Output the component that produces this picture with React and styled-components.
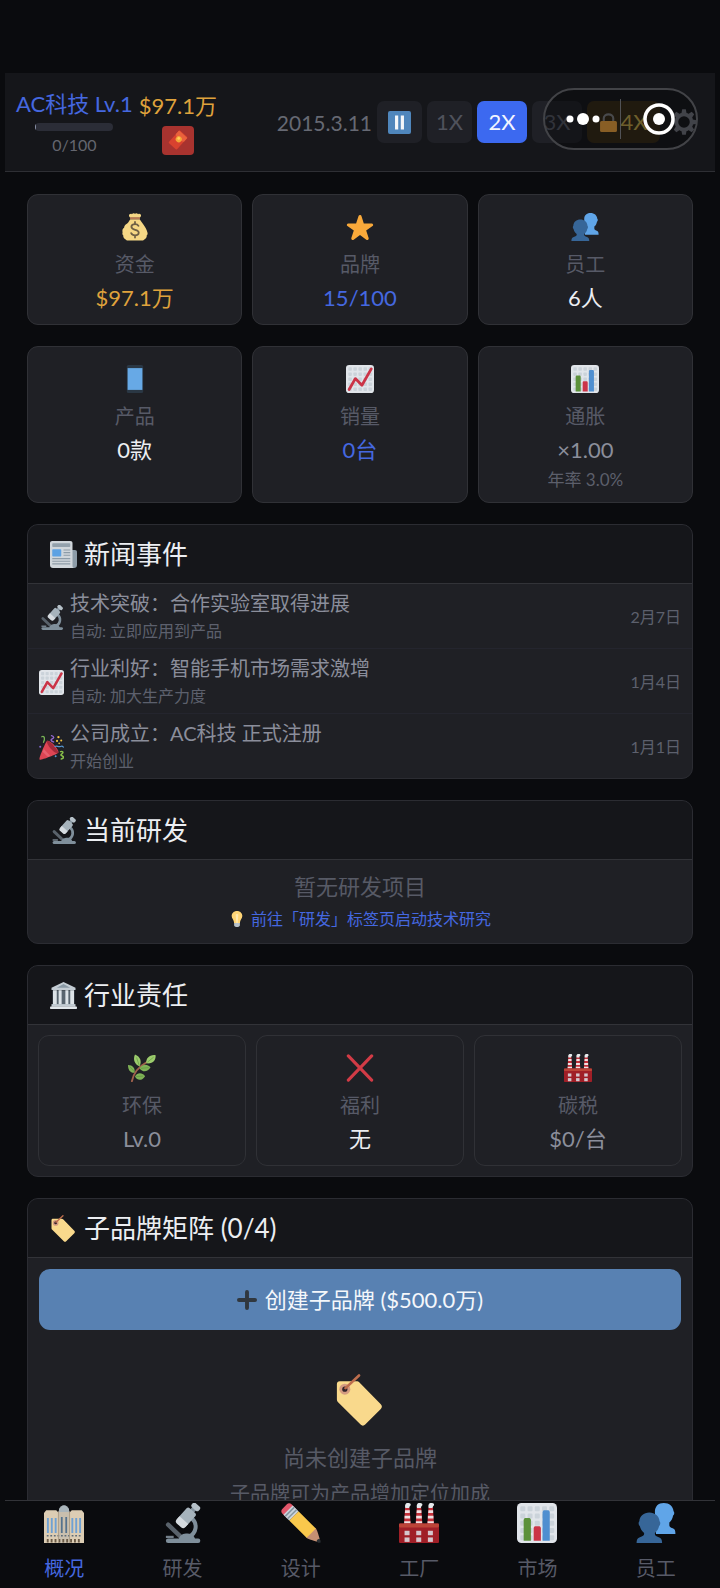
import React, { useState } from 'react';
import styled, { createGlobalStyle } from 'styled-components';

const GlobalStyle = createGlobalStyle`
  * {
    box-sizing: border-box;
  }

  body {
    margin: 0;
    background-color: #0a0b0e;
    color: #eceef2;
    font-family: Lato, 'Noto Sans CJK SC', sans-serif;
    font-size: 20px;
  }

  button {
    font-family: inherit;
    border: none;
    padding: 0;
    cursor: pointer;
  }
`;

const tones = {
  gold: '#dfa23c',
  blue: '#4568e0',
  white: '#eceef2',
  muted: '#8b8e9b',
};

const Shell = styled.div`
  display: flex;
  flex-direction: column;
  height: 100vh;
  padding: 73px 5px 0;
`;

const Header = styled.header`
  position: relative;
  display: flex;
  flex: none;
  align-items: center;
  min-height: 99px;
  padding: 0 18px 0 11px;
  background-color: #15161a;
  border-bottom: 1px solid #2e2f34;
`;

const HeaderColumn = styled.div`
  display: flex;
  flex-direction: column;
  align-items: center;
  margin-right: 6px;
`;

const HeaderText = styled.span`
  font-size: 22px;
  line-height: 32px;
  white-space: nowrap;
  color: ${(props) => tones[props.$tone]};
`;

const Track = styled.div`
  width: 78px;
  height: 8px;
  margin: 3px 0 2px;
  border-radius: 4px;
  overflow: hidden;
  background-color: #2b2d37;
`;

const TrackFill = styled.div`
  height: 100%;
  background-color: #8c93a8;
`;

const LevelText = styled.span`
  font-size: 16px;
  line-height: 24px;
  color: #64666f;
`;

const GiftButton = styled.button`
  display: flex;
  align-items: center;
  justify-content: center;
  width: 32px;
  height: 29px;
  margin-top: 4px;
  border-radius: 4px;
  background-color: #a8332f;
`;

const Controls = styled.div`
  display: flex;
  align-items: center;
  gap: 5px;
  margin-left: auto;
`;

const DateText = styled.time`
  font-size: 21px;
  color: #666973;
`;

const SpeedButton = styled.button`
  display: flex;
  align-items: center;
  justify-content: center;
  gap: 2px;
  width: ${(props) => props.$width}px;
  height: 42px;
  border-radius: 7px;
  font-size: 22px;
  line-height: 32px;
  color: ${(props) => (props.$active ? '#f2f5ff' : '#4f525c')};
  background-color: ${(props) => (props.$active ? '#3c69f0' : '#1f2026')};
`;

const LockedButton = styled(SpeedButton)`
  color: #b39b45;
  background-color: #332814;
`;

const GearButton = styled.button`
  display: flex;
  margin-left: 6px;
  background: none;
`;

const Capsule = styled.div`
  position: absolute;
  top: 15px;
  right: 17px;
  display: flex;
  align-items: center;
  height: 62px;
  width: 155px;
  border: 2px solid #424347;
  border-radius: 31px;
  background-color: rgba(4, 5, 8, 0.4);
`;

const CapsuleButton = styled.button`
  display: flex;
  flex: 1;
  align-items: center;
  justify-content: center;
  height: 40px;
  background: none;

  & + & {
    border-left: 1px solid #515256;
  }
`;

const Main = styled.main`
  display: flex;
  flex: 1;
  flex-direction: column;
  gap: 21px;
  min-height: 0;
  padding: 22px 22px 0;
  overflow-y: auto;
  scrollbar-width: none;
`;

const CardGrid = styled.div`
  display: grid;
  flex: none;
  grid-template-columns: repeat(3, 1fr);
  gap: 21px 10px;
`;

const Card = styled.article`
  display: flex;
  flex-direction: column;
  align-items: center;
  padding: 9px;
  border: 1px solid #303136;
  border-radius: 11px;
  background-color: #1f2025;
`;

const CardIcon = styled.div`
  display: flex;
  align-items: center;
  height: 45px;
`;

const CardLabel = styled.span`
  font-size: 20px;
  line-height: 31px;
  color: #575a67;
`;

const CardValue = styled.span`
  font-size: 22px;
  line-height: 35px;
  color: ${(props) => tones[props.$tone]};
`;

const CardNote = styled.span`
  font-size: 17px;
  line-height: 26px;
  color: #5c5f6b;
`;

const PanelBox = styled.section`
  flex: none;
  border: 1px solid #2b2c32;
  border-radius: 11px;
  overflow: hidden;
  background-color: #1f2025;
`;

const PanelTitle = styled.h2`
  display: flex;
  align-items: center;
  gap: 7px;
  height: 59px;
  margin: 0;
  padding: 0 22px;
  border-bottom: 1px solid #323338;
  background-color: #15161a;
  font-size: 26px;
  font-weight: 400;
  line-height: 36px;
`;

const PanelBody = styled.div`
  padding: ${(props) => props.$padding || '10px'};
`;

const NewsList = styled.ul`
  margin: 0;
  padding: 0;
  list-style: none;
`;

const NewsItem = styled.li`
  display: flex;
  align-items: center;
  gap: 6px;
  padding: 5px 11px 3px;
  border-bottom: 1px solid #24252e;

  &:last-child {
    border-bottom: none;
  }
`;

const NewsText = styled.div`
  display: flex;
  flex: 1;
  flex-direction: column;
`;

const NewsTitle = styled.span`
  font-size: 20px;
  line-height: 28px;
  color: #8b8e9b;
`;

const NewsNote = styled.span`
  font-size: 16px;
  line-height: 28px;
  color: #5d606d;
`;

const Centered = styled.div`
  display: flex;
  flex-direction: column;
  align-items: center;
`;

const EmptyTitle = styled.span`
  font-size: 22px;
  line-height: 32px;
  color: #575a66;
`;

const HintLink = styled.a`
  display: flex;
  align-items: center;
  gap: 6px;
  font-size: 16px;
  line-height: 32px;
  color: #4568e0;
  text-decoration: none;
`;

const EmptyNote = styled.span`
  font-size: 20px;
  line-height: 38px;
  color: #575a66;
`;

const EmptyBrand = styled(Centered)`
  padding: 44px 0 40px;

  svg {
    margin-bottom: 16px;
  }
`;

const CreateButton = styled.button`
  display: flex;
  align-items: center;
  justify-content: center;
  gap: 8px;
  width: 100%;
  height: 61px;
  border-radius: 11px;
  background-color: #5881b2;
  color: #f4f7fb;
  font-size: 22px;
  line-height: 32px;
`;

const TabBar = styled.nav`
  display: grid;
  flex: none;
  grid-template-columns: repeat(6, 1fr);
  height: 88px;
  border-top: 1px solid #323338;
`;

const TabButton = styled.button`
  display: flex;
  flex-direction: column;
  align-items: center;
  gap: 8px;
  padding-top: 2px;
  background: none;
  font-size: 20px;
  line-height: 34px;
  color: ${(props) => (props.$active ? '#4568e0' : '#575a67')};
`;

const Svg = ({ size = 28, children }) => (
  <svg width={size} height={size} viewBox="0 0 36 36" aria-hidden="true">
    {children}
  </svg>
);

const MoneyBag = ({ size }) => (
  <Svg size={size}>
    <path fill="#F5D785" d="M12 8h12c2 3 3 4 5 7 2 3 4 6 5 10 .6 2 0 3-1 4 .5 2-1 4-3 5-1 1-2 1.500-4 1.500H10c-2 0-3-.5-4-1.500-2-1-3.500-3-3-5-1-1-1.600-2-1-4-.5-3 0-5 2-6 0-2 1-4 3-5 2-1 3-3 5-6z" />
    <path fill="#F5D785" d="M11 5c-1-1-1-3 0-3.500S13 .5 14 1.500C15 0 17-.2 18 1c1-1.200 3-1 4 .5 1-1 2.500-.5 3 0 1 .5 1 2.500 0 3.500l-1 1H12z" />
    <rect x="11.500" y="5.500" width="13" height="2.500" rx="1.200" fill="#B97A55" />
    <path fill="none" stroke="#6E5F45" strokeWidth="2.300" strokeLinecap="round" d="M22.500 16.500c-1-1.800-2.700-2.300-4.500-2.300-2.600 0-4.600 1.300-4.600 3.600 0 5.200 9.400 2.300 9.400 7.300 0 2.300-2 3.700-4.800 3.700-2.200 0-4-.9-4.900-2.900M18 11.500v2.700M18 29v2.500" />
  </Svg>
);

const Star = ({ size }) => (
  <Svg size={size}>
    <path fill="#F9A93A" d="M27.287 34.627c-.404 0-.806-.124-1.152-.371L18 28.422l-8.135 5.834c-.343.247-.746.371-1.148.371-.404 0-.811-.125-1.156-.377-.68-.493-.964-1.372-.703-2.173l3.179-9.536-8.186-5.680c-.682-.5-.96-1.380-.69-2.180.266-.8 1.020-1.340 1.860-1.340h.01l9.947.016 3.162-9.519c.266-.8 1.014-1.341 1.857-1.341.845 0 1.594.54 1.861 1.341l3.038 9.519 10.070-.016c.85-.001 1.590.54 1.860 1.340.26.8-.01 1.680-.7 2.180l-8.186 5.680 3.180 9.536c.26.8-.02 1.680-.7 2.173-.35.25-.757.377-1.160.377z" />
  </Svg>
);

const People = ({ size }) => (
  <Svg size={size}>
    <path fill="#60A5E8" d="M25 0c5 0 8.500 3 8.800 7.500.9.500.9 3-.4 3.800-.5 3-1.800 5-3.400 6.200v2.500c0 1.500 1 2 3 2.800 2 .7 2.500 2 2.500 5.200H18L17 8c0-5 3-8 8-8z" />
    <path fill="#376698" d="M12 8.500c5 0 9 3.200 9.200 8 1 .8.800 3.400-.4 4.300-.5 2.700-1.900 4.700-3.800 6.200v1c0 1.500 1 2 3.500 2.800 2 .7 3 2 3 5.200h-23c0-3.200 1-4.500 3-5.200C6 30 7.300 29.500 7.300 28v-1c-1.900-1.500-3.300-3.500-3.900-6.200-1.200-.9-1.400-3.500-.4-4.300.2-4.800 4-8 9-8z" />
  </Svg>
);

const Phone = ({ size }) => (
  <Svg size={size}>
    <rect x="7.500" y="0" width="21" height="36" rx="2" fill="#2A3744" />
    <rect x="8.500" y="4" width="19" height="28" fill="#67A9E6" />
  </Svg>
);

const tiles = [3, 9.500, 16, 22.500, 29];

const ChartPaper = () => (
  <>
    <rect width="36" height="36" rx="4" fill="#E1E5EA" />
    {tiles.map((y) =>
      tiles.map((x) => (
        <rect key={`${x}-${y}`} x={x} y={y} width="4.500" height="4.500" rx="1" fill="#CBD3DA" />
      ))
    )}
  </>
);

const ChartUp = ({ size }) => (
  <Svg size={size}>
    <ChartPaper />
    <path fill="none" stroke="#CB3447" strokeWidth="3.600" strokeLinecap="round" strokeLinejoin="round" d="M4 31.500L12 17.500l8.500 8.500L32.500 5" />
  </Svg>
);

const BarChart = ({ size }) => (
  <Svg size={size}>
    <ChartPaper />
    <path fill="#5C913B" d="M6 34V15.500c0-1.500.8-2 2-2h2.500c1.200 0 2 .5 2 2V34z" />
    <path fill="#CB3447" d="M15 34V23c0-1.500.8-2 2-2h2.500c1.200 0 2 .5 2 2v11z" />
    <path fill="#4F8FD0" d="M23 34V8.500c0-1.500.8-2 2-2h2.500c1.200 0 2 .5 2 2V34z" />
  </Svg>
);

const Newspaper = ({ size }) => (
  <Svg size={size}>
    <path fill="#8D9CA8" d="M27 12h6c2 0 3 1 3 3v17c0 2.500-1.500 4-4 4h-7z" />
    <path fill="#D0D6DB" d="M3 0h24c2 0 3 1 3 3v30c0 2 1 3 2 3H4c-2.500 0-4-1.500-4-4V3c0-2 1-3 3-3z" />
    <rect x="3" y="3" width="24" height="5" rx="1" fill="#93A1AC" />
    <rect x="3" y="11" width="12" height="9.500" rx="1" fill="#5DA2E3" />
    <path stroke="#8D9CA8" strokeWidth="1.400" d="M18 12h9M18 15.500h9M18 19h9M3 23.500h24M3 27h24M3 30.500h24" />
  </Svg>
);

const Microscope = ({ size }) => (
  <Svg size={size}>
    <path stroke="#59626B" strokeWidth="4" strokeLinecap="round" d="M5.500 19.500l11 10.500" />
    <path fill="#74808B" d="M3.500 29.500h7v2h-7z" />
    <path fill="none" stroke="#7F8F9B" strokeWidth="3.600" strokeLinecap="round" d="M27 14c5 4.500 4.500 13-3 16.500" />
    <path fill="#7F8F9B" d="M15 33c1-4.500 4-5.500 8-5.500 4.500 0 6 2.500 7 5.500z" />
    <rect x="3.500" y="32" width="31" height="4" rx="2" fill="#7F8F9B" />
    <g transform="rotate(42 21.500 13)">
      <path fill="#83929E" d="M19.500 0h4.500v6h-4.500z" />
      <rect x="16.500" y="4.500" width="10.500" height="16" rx="2" fill="#A6B3BC" />
      <path fill="#D5DBE0" d="M16.500 16h10.500v4c0 1.500-1 2.500-2.500 2.500H19c-1.500 0-2.500-1-2.500-2.500z" />
      <rect x="17.500" y="-2.500" width="8.500" height="5" rx="2" fill="#B5C0C8" />
    </g>
  </Svg>
);

const Popper = ({ size }) => (
  <Svg size={size}>
    <path fill="#DD4554" d="M11.500 8.500c1-1 7 2 11 6.500s6.500 9 5.300 10.500C26 27.500 3 36.500 1 35.500S9.500 10 11.500 8.500z" />
    <path fill="#A52A3A" d="M11.500 8.500c3-.5 6.500 3.500 10 7.500s6.500 8 6.300 9.500c-3 1.300-7-1.500-10.500-5.500S11 12 11.500 8.500z" />
    <path fill="#E8606E" d="M7 20l9 10-3 1.500-8-7.500z" />
    <path fill="none" stroke="#77B255" strokeWidth="1.900" strokeLinecap="round" d="M4 2.500c4-2 5 3 2.500 8" />
    <path fill="none" stroke="#9266CC" strokeWidth="2" strokeLinecap="round" d="M18 1c4 1.500 4 3 1 4.500s-1 3.500 2 4.500" />
    <path fill="none" stroke="#8AC04A" strokeWidth="2" strokeLinecap="round" d="M31 24c5-1 4 2 1.500 3.500S33 30 35 31s-1 3-3 3.500" />
    <path fill="none" stroke="#5795D0" strokeWidth="1.800" strokeLinecap="round" d="M23 16.500c3-1.500 5 1.500 8 0s3 0 4 1" />
    <g fill="#F4C542">
      <circle cx="28" cy="3" r="1.700" />
      <circle cx="32" cy="8" r="1.500" />
      <circle cx="26" cy="8.500" r="1.500" />
      <circle cx="29" cy="12" r="1.200" />
    </g>
    <circle cx="1.800" cy="17" r="1.500" fill="#8266CC" />
    <circle cx="24" cy="30.500" r="1.400" fill="#5795D0" />
  </Svg>
);

const Bulb = ({ size }) => (
  <Svg size={size}>
    <path fill="#FFD576" d="M18 0c7 0 12 5 12 11.500 0 6-5.500 9-5.500 15.500h-13C11.500 20.500 6 17.500 6 11.500 6 5 11 0 18 0z" />
    <path fill="#FFE9B0" d="M15 8c0-2 6-2 6 0l-1.500 19h-3z" />
    <path fill="#B8C2CA" d="M11.500 27h13v5c0 2.500-3 4-6.500 4s-6.500-1.500-6.500-4z" />
  </Svg>
);

const Bank = ({ size }) => (
  <Svg size={size}>
    <path fill="#C3CCD3" d="M18 0l16 7.500v3H2v-3z" />
    <path fill="#8999A5" d="M18 2.800l9 4.700H9z" />
    <rect x="3.500" y="11" width="29" height="20" fill="#59656F" />
    <path fill="#DDE3E7" d="M4 11h5v19H4zM11.500 11h4v19h-4zM20.500 11h4v19h-4zM27 11h5v19h-5z" />
    <rect x="2" y="29.500" width="32" height="3.500" fill="#C3CCD3" />
    <rect x="0" y="32.500" width="36" height="3.500" rx="1" fill="#E1E6EA" />
  </Svg>
);

const Herb = ({ size }) => (
  <Svg size={size}>
    <path fill="none" stroke="#A0614C" strokeWidth="2.400" strokeLinecap="round" d="M5 35c2-10 7-18 20-25" />
    <path fill="#9BCB6C" d="M35.500 1.500c.5 6-3 11.500-12 10.500-.5-6.500 4-11.500 12-10.500zM9 .5c7 3 9 8.500 6 15.500C8.500 13 6 7 9 .5z" />
    <path fill="#7FB256" d="M15 18.500c3-6 10-6 14-1.500-3.500 6-10 7-14 1.500zM9 29c3-5.500 9-5.500 13-.5-3.500 6-10 6.500-13 .5zM8.500 24C3 24.500 0 20.500 0 14c6 0 9.500 4 8.500 10z" />
    <path fill="none" stroke="#5C913B" strokeWidth="0.800" d="M25 10.500l8-6.500M14.500 15L11 4.500M16.500 18.500l10-1M10.500 29l9-.5M8 22.500l-5.500-6" />
  </Svg>
);

const Cross = ({ size }) => (
  <Svg size={size}>
    <path stroke="#D23B46" strokeWidth="4" strokeLinecap="round" d="M3 2.500l30 31M33 2.500l-30 31" />
  </Svg>
);

const Factory = ({ size }) => (
  <Svg size={size}>
    {[4.500, 15, 25.500].map((x) => (
      <g key={x}>
        <path fill="#C5303A" d={`M${x + 1} 4h4l1 15h-6z`} />
        <path fill="#EFE2E4" d={`M${x + 1} 6.500h4.200v2.500h-4.400zM${x + 0.5} 11.500h5v2.500h-5zM${x + 0.2} 16.500h5.600v2h-5.600z`} />
        <path fill="#E6EAED" d={`M${x + 1.200} 4.500c-1-3.500 1-5 3-4.500 2 0 2.500 2 1 3l-.6 1.500z`} />
      </g>
    ))}
    <rect x="0" y="18.500" width="36" height="17.500" rx="1" fill="#A01F27" />
    <rect x="0" y="18.500" width="36" height="3.500" rx="1" fill="#BC4438" />
    {[5, 15.500, 26].map((x) => (
      <g key={x} fill="#D5C6CD">
        <rect x={x} y="25" width="4.500" height="4" />
        <rect x={x} y="31" width="4.500" height="4" />
      </g>
    ))}
  </Svg>
);

const Tag = ({ size }) => (
  <Svg size={size}>
    <path fill="#F9D98C" d="M4 5h11.500c1 0 1.600.3 2.300 1l14.600 15c1 1 1 2.200 0 3.200L21.600 35c-1 1-2.200 1-3.200 0L3 19.800c-.7-.7-1-1.300-1-2.300V7c0-1.300.7-2 2-2z" />
    <circle cx="7.500" cy="10.500" r="3.800" fill="#D49B81" />
    <circle cx="7.500" cy="10.500" r="1.800" fill="#30222A" />
    <path stroke="#BD6D4D" strokeWidth="1.800" strokeLinecap="round" d="M8 9.800L17.300 1" />
  </Svg>
);

const Plus = ({ size }) => (
  <Svg size={size}>
    <path stroke="#30373E" strokeWidth="7" strokeLinecap="round" d="M18 3.500v29M3.500 18h29" />
  </Svg>
);

const Buildings = ({ size }) => (
  <Svg size={size}>
    <path fill="#DCCDB4" d="M0 9l2-2.500h9L13.500 9v27H0zM22.500 9L25 6.500h9L36 9v27H22.500z" />
    <path fill="#C9BFAE" d="M13 7h10v29H13z" />
    <path fill="#AAB5BB" d="M13.500 8V5l2-2 1.500-1h2l1.500 1 2 2v3z" />
    <path stroke="#6FA1D3" strokeWidth="1.700" d="M3.500 13.500V27M7 13.500V27M10.500 13.500V27M25.500 13.500V27M29 13.500V27M32.500 13.500V27" />
    <path stroke="#55728D" strokeWidth="1.600" d="M16 12.500V27M20 12.500V27" />
    <path stroke="#5E6C78" strokeWidth="1.500" strokeDasharray="1.600 1.600" d="M2.500 29.500h31" />
    <path stroke="#6A5A46" strokeWidth="3" strokeDasharray="1.700 1.800" d="M2.500 34h31" />
    <path stroke="#A99B83" strokeWidth="0.800" d="M13 8v28M23 8v28" />
  </Svg>
);

const Pencil = ({ size }) => (
  <Svg size={size}>
    <path fill="#C58F73" d="M35.222 33.598c-.647-2.101-1.705-6.059-2.325-7.566-.501-1.216-.969-2.438-1.544-3.014-.575-.575-1.553-.53-2.143.058 0 0-2.469 1.675-3.354 2.783-1.108.882-2.785 3.357-2.785 3.357-.59.59-.635 1.567-.06 2.143.576.575 1.798 1.043 3.015 1.544 1.506.62 5.465 1.676 7.566 2.325.359.11 1.740-1.271 1.630-1.630z" />
    <path fill="#E2576B" d="M13.643 5.308c1.151 1.151 1.151 3.016 0 4.167l-4.167 4.168c-1.151 1.150-3.018 1.150-4.167 0L1.141 9.475c-1.150-1.151-1.150-3.016 0-4.167l4.167-4.167c1.150-1.151 3.016-1.151 4.167 0l4.168 4.167z" />
    <path fill="#F9C84C" d="M31.353 23.018l-4.170 4.170-4.163 4.165L7.392 15.726l8.335-8.334 15.626 15.626z" />
    <path fill="#292F33" d="M32.078 34.763s2.709 1.489 3.441.757c.732-.732-.765-3.435-.765-3.435s-2.566.048-2.676 2.678z" />
    <path fill="#CCD6DD" d="M2.183 10.517l8.335-8.335 5.208 5.209-8.334 8.335z" />
    <path fill="#8697A3" d="M3.225 11.558l8.334-8.334 1.042 1.042L4.267 12.600zm2.083 2.086l8.335-8.335 1.042 1.042-8.335 8.334z" />
  </Svg>
);

const Pause = ({ size }) => (
  <Svg size={size}>
    <rect width="36" height="36" rx="3" fill="#4F86BC" />
    <path fill="#F3F6F9" d="M11 7h5v22h-5zM20 7h5v22h-5z" />
  </Svg>
);

const Lock = ({ size }) => (
  <Svg size={size}>
    <path fill="none" stroke="#77797b" strokeWidth="4" d="M9 19v-9C9 0 27 0 27 10v9" />
    <rect x="2" y="15" width="32" height="21" rx="3" fill="#E09A3A" />
  </Svg>
);

const RedPacket = ({ size }) => (
  <Svg size={size}>
    <g transform="rotate(42 18 18)">
      <rect x="8" y="3" width="20" height="30" rx="2" fill="#D9422F" />
      <path fill="#E9613C" d="M8 4h20v9c-6 5-14 5-20 0z" />
      <circle cx="18" cy="16" r="5.500" fill="#F4A638" />
      <circle cx="17" cy="15" r="2.500" fill="#FFD05C" />
    </g>
  </Svg>
);

const Gear = ({ size }) => (
  <Svg size={size}>
    <circle cx="18" cy="18" r="10.500" fill="none" stroke="#6a6d75" strokeWidth="5" />
    {[0, 45, 90, 135, 180, 225, 270, 315].map((angle) => (
      <path key={angle} fill="#6a6d75" d="M14.500 6l1-5.500h5l1 5.500z" transform={`rotate(${angle} 18 18)`} />
    ))}
  </Svg>
);

const stats = [
  { label: '资金', value: '$97.1万', tone: 'gold', Icon: MoneyBag },
  { label: '品牌', value: '15/100', tone: 'blue', Icon: Star },
  { label: '员工', value: '6人', tone: 'white', Icon: People },
  { label: '产品', value: '0款', tone: 'white', Icon: Phone },
  { label: '销量', value: '0台', tone: 'blue', Icon: ChartUp },
  { label: '通胀', value: '×1.00', tone: 'muted', Icon: BarChart, note: '年率 3.0%' },
];

const duties = [
  { label: '环保', value: 'Lv.0', tone: 'muted', Icon: Herb },
  { label: '福利', value: '无', tone: 'white', Icon: Cross },
  { label: '碳税', value: '$0/台', tone: 'muted', Icon: Factory },
];

const news = [
  { title: '技术突破：合作实验室取得进展', note: '自动: 立即应用到产品', date: '2月7日', Icon: Microscope },
  { title: '行业利好：智能手机市场需求激增', note: '自动: 加大生产力度', date: '1月4日', Icon: ChartUp },
  { title: '公司成立：AC科技 正式注册', note: '开始创业', date: '1月1日', Icon: Popper },
];

const tabs = [
  { label: '概况', Icon: Buildings },
  { label: '研发', Icon: Microscope },
  { label: '设计', Icon: Pencil },
  { label: '工厂', Icon: Factory },
  { label: '市场', Icon: BarChart },
  { label: '员工', Icon: People },
];

const StatCard = ({ label, value, tone, note, Icon }) => (
  <Card>
    <CardIcon>
      <Icon size={28} />
    </CardIcon>
    <CardLabel>{label}</CardLabel>
    <CardValue $tone={tone}>{value}</CardValue>
    {note && <CardNote>{note}</CardNote>}
  </Card>
);

const Panel = ({ title, Icon, children }) => (
  <PanelBox>
    <PanelTitle>
      <Icon size={27} />
      {title}
    </PanelTitle>
    {children}
  </PanelBox>
);

const App = () => {
  const [speed, setSpeed] = useState(2);
  const [tab, setTab] = useState('概况');
  const progress = 1;

  return (
    <>
      <GlobalStyle />
      <Shell>
        <Header>
          <HeaderColumn>
            <HeaderText $tone="blue">AC科技 Lv.1</HeaderText>
            <Track role="progressbar" aria-label="经验" aria-valuenow={0} aria-valuemax={100}>
              <TrackFill style={{ width: `${progress}%` }} />
            </Track>
            <LevelText>0/100</LevelText>
          </HeaderColumn>
          <HeaderColumn>
            <HeaderText $tone="gold">$97.1万</HeaderText>
            <GiftButton aria-label="红包">
              <RedPacket size={20} />
            </GiftButton>
          </HeaderColumn>
          <Controls>
            <DateText>2015.3.11</DateText>
            <SpeedButton $width={45} $active={speed === 0} onClick={() => setSpeed(0)} aria-label="暂停">
              <Pause size={23} />
            </SpeedButton>
            <SpeedButton $width={45} $active={speed === 1} onClick={() => setSpeed(1)}>
              1X
            </SpeedButton>
            <SpeedButton $width={50} $active={speed === 2} onClick={() => setSpeed(2)}>
              2X
            </SpeedButton>
            <SpeedButton $width={50} $active={speed === 3} onClick={() => setSpeed(3)}>
              3X
            </SpeedButton>
            <LockedButton $width={73}>
              <Lock size={19} />
              4X
            </LockedButton>
            <GearButton aria-label="设置">
              <Gear size={26} />
            </GearButton>
          </Controls>
          <Capsule>
            <CapsuleButton aria-label="更多">
              <svg width="34" height="14" viewBox="0 0 34 14" fill="#fff">
                <circle cx="4" cy="7" r="3.500" />
                <circle cx="17" cy="7" r="6" />
                <circle cx="30" cy="7" r="3.500" />
              </svg>
            </CapsuleButton>
            <CapsuleButton aria-label="关闭">
              <svg width="32" height="32" viewBox="0 0 32 32">
                <circle cx="16" cy="16" r="14" fill="none" stroke="#fff" strokeWidth="3.500" />
                <circle cx="16" cy="16" r="6" fill="#fff" />
              </svg>
            </CapsuleButton>
          </Capsule>
        </Header>

        <Main>
          <CardGrid>
            {stats.map((stat) => (
              <StatCard key={stat.label} {...stat} />
            ))}
          </CardGrid>

          <Panel title="新闻事件" Icon={Newspaper}>
            <NewsList>
              {news.map(({ title, note, date, Icon }) => (
                <NewsItem key={title}>
                  <Icon size={25} />
                  <NewsText>
                    <NewsTitle>{title}</NewsTitle>
                    <NewsNote>{note}</NewsNote>
                  </NewsText>
                  <NewsNote as="time">{date}</NewsNote>
                </NewsItem>
              ))}
            </NewsList>
          </Panel>

          <Panel title="当前研发" Icon={Microscope}>
            <PanelBody $padding="11px 10px 8px">
              <Centered>
                <EmptyTitle>暂无研发项目</EmptyTitle>
                <HintLink href="#research">
                  <Bulb size={16} />
                  前往「研发」标签页启动技术研究
                </HintLink>
              </Centered>
            </PanelBody>
          </Panel>

          <Panel title="行业责任" Icon={Bank}>
            <PanelBody>
              <CardGrid>
                {duties.map((duty) => (
                  <StatCard key={duty.label} {...duty} />
                ))}
              </CardGrid>
            </PanelBody>
          </Panel>

          <Panel title="子品牌矩阵 (0/4)" Icon={Tag}>
            <PanelBody $padding="11px">
              <CreateButton>
                <Plus size={20} />
                创建子品牌 ($500.0万)
              </CreateButton>
              <EmptyBrand>
                <Tag size={52} />
                <EmptyTitle>尚未创建子品牌</EmptyTitle>
                <EmptyNote>子品牌可为产品增加定位加成</EmptyNote>
              </EmptyBrand>
            </PanelBody>
          </Panel>
        </Main>

        <TabBar>
          {tabs.map(({ label, Icon }) => (
            <TabButton key={label} $active={tab === label} onClick={() => setTab(label)}>
              <Icon size={40} />
              {label}
            </TabButton>
          ))}
        </TabBar>
      </Shell>
    </>
  );
};

export default App;
